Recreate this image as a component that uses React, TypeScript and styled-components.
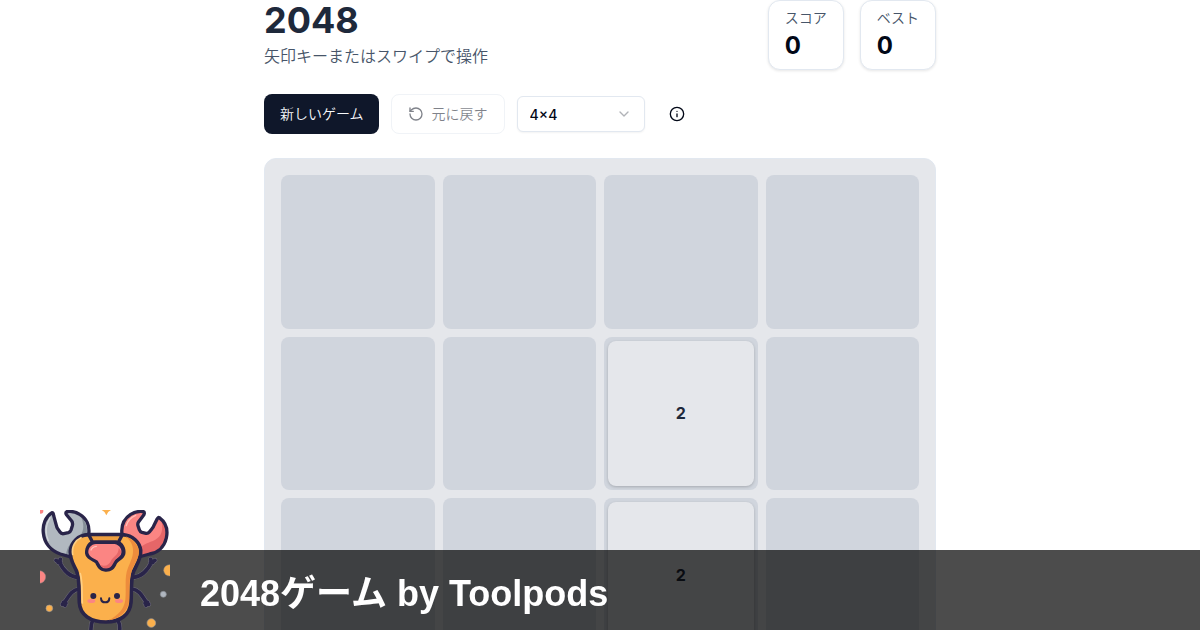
import React, { useState } from "react";
import styled, { createGlobalStyle } from "styled-components";
import { ChevronDown, Info, RotateCcw } from "lucide-react";

const GlobalStyle = createGlobalStyle`
  *, *::before, *::after { box-sizing: border-box; }
  html, body { margin: 0; background: #ffffff; }
  body, button, select {
    font-family: Inter, "Noto Sans CJK JP", sans-serif;
    color: #020817;
  }
`;

const Page = styled.div`
  height: 100vh;
  overflow: hidden;
`;

const Game = styled.main`
  display: flex;
  flex-direction: column;
  gap: 24px;
  max-width: 672px;
  margin: 0 auto;
`;

const Header = styled.header`
  display: flex;
  justify-content: space-between;
  align-items: flex-start;
`;

const Title = styled.h1`
  margin: 0 0 4px;
  font-size: 36px;
  line-height: 40px;
  font-weight: 700;
  color: #1e293b;
`;

const Hint = styled.p`
  margin: 0;
  font-size: 16px;
  line-height: 24px;
  font-weight: 350;
  color: #475569;
`;

const Scores = styled.div`
  display: flex;
  gap: 16px;
`;

const ScoreCard = styled.div`
  padding: 8px 16px;
  border: 1px solid #e2e8f0;
  border-radius: 12px;
  background: #ffffff;
  box-shadow: 0 1px 3px rgba(0, 0, 0, 0.1);
`;

const ScoreLabel = styled.div`
  padding-bottom: 2px;
  font-size: 14px;
  line-height: 18px;
  font-weight: 350;
  color: #475569;
`;

const ScoreValue = styled.div`
  padding-top: 1px;
  font-size: 24px;
  line-height: 31px;
  font-weight: 700;
`;

const Toolbar = styled.div`
  display: flex;
  align-items: center;
  gap: 12px;
`;

const Button = styled.button<{ $variant: "primary" | "outline" | "ghost" }>`
  display: inline-flex;
  align-items: center;
  justify-content: center;
  gap: 8px;
  height: 40px;
  min-width: 40px;
  padding: 0 ${(p) => ({ primary: "15px 1px 16px", outline: "16px", ghost: "0" })[p.$variant]};
  border: ${(p) => (p.$variant === "outline" ? "1px solid #e2e8f0" : "0")};
  border-radius: 8px;
  background: ${(p) => (p.$variant === "primary" ? "#0f172a" : "transparent")};
  color: ${(p) => (p.$variant === "primary" ? "#f8fafc" : "#020817")};
  font-size: 14px;
  line-height: 20px;
  font-weight: 350;

  &:disabled { opacity: 0.5; }
`;

const SelectBox = styled.div`
  display: grid;
  align-items: center;
  width: 128px;

  > * { grid-area: 1 / 1; }

  svg {
    justify-self: end;
    margin-right: 13px;
    color: #020817;
    opacity: 0.3;
    pointer-events: none;
  }
`;

const SizeSelect = styled.select`
  appearance: none;
  width: 100%;
  height: 36px;
  padding: 0 12px;
  border: 1px solid #e2e8f0;
  border-radius: 6px;
  background: #ffffff;
  box-shadow: 0 1px 2px rgba(0, 0, 0, 0.05);
  font-size: 14px;
  font-weight: 500;
`;

const Board = styled.div`
  display: grid;
  grid-template-columns: repeat(4, 1fr);
  gap: 8px;
  padding: 16px;
  border: 1px solid #e2e8f0;
  border-radius: 12px;
  background: #e5e7eb;
`;

const Cell = styled.div`
  display: flex;
  aspect-ratio: 1;
  padding: 4px;
  border-radius: 8px;
  background: #d0d5dd;
`;

const Tile = styled.div`
  display: flex;
  flex: 1;
  align-items: center;
  justify-content: center;
  border-radius: 8px;
  background: #e5e7eb;
  box-shadow: 0 1px 3px rgba(0, 0, 0, 0.2);
  font-size: 16px;
  font-weight: 700;
  color: #1e293b;
`;

const Banner = styled.footer`
  position: fixed;
  inset: auto 0 0 0;
  display: flex;
  align-items: flex-end;
  gap: 30px;
  height: 80px;
  padding-left: 40px;
  background: rgba(0, 0, 0, 0.7);
`;

const BannerText = styled.div`
  padding-top: 8px;
  font-family: "Liberation Sans", "Noto Sans CJK JP", sans-serif;
  font-size: 36px;
  line-height: 72px;
  font-weight: 700;
  white-space: nowrap;
  color: #ffffff;
`;

const MascotArt = styled.svg`
  display: block;
  flex: none;
  width: 130px;
  height: 120px;
`;

const INK = "#292449";

const GREY_WRENCH =
  "M66 38C46 50 37 75 40 99C43 129 62 152 91 162L127 172L176 104C180 78 170 55 149 43C138 36 124 33 111 35C106 37 107 41 110 45L125 63Q129 69 127 77L123 90Q121 96 115 98L101 101Q94 102 90 96L83 86Q80 82 79 76L71 47Q70 38 66 38Z";
const RED_WRENCH =
  "M388 53C408 68 414 91 409 114C403 142 382 158 359 162L326 171L276 103C273 79 282 56 302 43C314 36 328 33 340 35C345 37 343 43 339 48L326 65Q322 71 324 77L328 89Q330 95 336 97L348 100Q354 101 358 96L366 86Q370 82 372 76L381 58Q384 51 388 53Z";

function Mascot() {
  return (
    <MascotArt viewBox="30 30 390 360" role="img" aria-label="Toolpods">
      <circle cx="32" cy="33" r="8" fill="#fb8583" />
      <path d="M215 30H243Q233 34 229 46Q225 34 215 30Z" fill="#fbb04c" />
      <circle cx="28" cy="231" r="19" fill="#fb8583" stroke="#858080" strokeWidth="1.5" />
      <circle cx="418" cy="211" r="17" fill="#fbb04c" stroke="#858080" strokeWidth="1.5" />
      <circle cx="58" cy="325" r="10" fill="#fbb04c" stroke="#a39c94" strokeWidth="2" />
      <circle cx="364" cy="369" r="13" fill="#fbb04c" stroke="#a39c94" strokeWidth="2" />
      <circle cx="400" cy="283" r="9" fill="#afb6bf" stroke="#858a90" strokeWidth="2" />

      <g fill="none" strokeLinecap="round" strokeLinejoin="round">
        {["#716e7a", INK].map((stroke, i) => (
          <g key={stroke} stroke={stroke} strokeWidth={i ? 11 : 14}>
            <path d="M143 232C119 230 100 211 87 184M78 181L88 188L91 178M84 187L92 188" />
            <path d="M310 232C334 230 353 211 366 184M375 181L365 188L362 178M369 187L361 188" />
            <path d="M148 267C123 270 115 292 101 311M97 313L108 310M100 307L105 316" />
            <path d="M306 267C331 270 338 292 352 311M356 313L345 310M353 307L348 316" />
            <path d="M187 364Q182 374 183 394M265 364Q271 374 269 394" />
          </g>
        ))}
      </g>

      <path d={GREY_WRENCH} fill="#b1b8c0" />
      <path d="M152 49C170 67 174 88 168 111L124 154L108 164C111 139 126 120 150 107C164 93 162 68 152 49Z" fill="#858e98" />
      <path d="M60 53C46 77 46 103 55 122" fill="none" stroke="#d4d8dc" strokeWidth="4" strokeLinecap="round" />
      <path d={GREY_WRENCH} fill="none" stroke={INK} strokeWidth="10" strokeLinejoin="round" />

      <path d={RED_WRENCH} fill="#fb8583" />
      <path d="M395 66C400 92 394 109 376 119C356 129 340 130 330 146L334 165C370 160 403 144 408 107Q408 80 395 66Z" fill="#e56668" />
      <path d="M289 77C293 62 303 52 317 46" fill="none" stroke="#ffc1b9" strokeWidth="4" strokeLinecap="round" />
      <path d={RED_WRENCH} fill="none" stroke={INK} strokeWidth="10" strokeLinejoin="round" />

      <path d="M174 104H278C309 107 329 126 332 151C334 174 320 194 310 216C302 240 305 273 303 307C300 344 271 366 228 366C182 366 150 345 148 307C146 270 150 239 140 214C130 191 119 179 121 153C124 126 144 106 174 104Z" fill="#fbb04c" stroke={INK} strokeWidth="11" strokeLinejoin="round" />
      <path d="M286 109C306 115 322 131 326 151C329 173 314 190 305 212C295 240 300 277 297 307C292 337 267 357 237 361C266 344 282 328 286 300C290 264 282 233 294 203C306 176 313 159 307 137Q301 120 286 109Z" fill="#ed8c3c" />
      <path d="M128 163C124 139 137 120 153 113M151 221C158 246 155 282 157 309" fill="none" stroke="#ffd084" strokeWidth="5" strokeLinecap="round" />
      <path d="M174 104H278L268 122H185Z" fill="#ed9e40" />
      <path d="M173 104H280M178 108L191 133M275 108L262 133" fill="none" stroke={INK} strokeWidth="10" strokeLinecap="round" />
      <path d="M194 121H259C279 124 290 145 286 163C281 179 264 184 260 192C254 208 243 216 226 215C208 214 201 201 196 190C187 182 168 179 165 160C164 141 175 122 194 121Z" fill={INK} />
      <path d="M198 132H254C270 135 278 150 273 163C268 173 253 178 248 188C243 200 236 206 225 205C214 204 209 192 203 182C194 175 178 172 175 158C174 144 183 133 198 132Z" fill="#fb8583" />
      <path d="M266 144C278 153 274 165 263 173C251 179 250 199 236 204Q220 208 211 195C228 201 238 193 243 182C249 169 266 167 266 144Z" fill="#e56668" />
      <path d="M183 150Q187 140 199 139" fill="none" stroke="#ffc1b9" strokeWidth="4" strokeLinecap="round" />
      <ellipse cx="184" cy="303" rx="12" ry="6" fill="#fb8583" />
      <ellipse cx="267" cy="303" rx="12" ry="6" fill="#fb8583" />
      <circle cx="190" cy="288" r="9" fill={INK} />
      <circle cx="261" cy="288" r="9" fill={INK} />
      <path d="M213 295C214 311 237 311 238 295" fill="none" stroke={INK} strokeWidth="6" strokeLinecap="round" />
    </MascotArt>
  );
}

const startingTiles = [0, 0, 0, 0, 0, 0, 2, 0, 0, 0, 2, 0, 0, 0, 0, 0];

export default function App() {
  const [size, setSize] = useState("4");

  return (
    <Page>
      <GlobalStyle />
      <Game>
        <Header>
          <div>
            <Title>2048</Title>
            <Hint>矢印キーまたはスワイプで操作</Hint>
          </div>
          <Scores>
            <ScoreCard>
              <ScoreLabel>スコア</ScoreLabel>
              <ScoreValue>0</ScoreValue>
            </ScoreCard>
            <ScoreCard>
              <ScoreLabel>ベスト</ScoreLabel>
              <ScoreValue>0</ScoreValue>
            </ScoreCard>
          </Scores>
        </Header>
        <Toolbar>
          <Button type="button" $variant="primary">新しいゲーム</Button>
          <Button type="button" $variant="outline" disabled>
            <RotateCcw size={16} />
            元に戻す
          </Button>
          <SelectBox>
            <SizeSelect aria-label="サイズ" value={size} onChange={(e) => setSize(e.target.value)}>
              <option value="4">4×4</option>
            </SizeSelect>
            <ChevronDown size={16} />
          </SelectBox>
          <Button type="button" $variant="ghost" aria-label="遊び方">
            <Info size={16} />
          </Button>
        </Toolbar>
        <Board>
          {startingTiles.map((value, i) => (
            <Cell key={i}>{value > 0 && <Tile>{value}</Tile>}</Cell>
          ))}
        </Board>
      </Game>
      <Banner>
        <Mascot />
        <BannerText>2048ゲーム by Toolpods</BannerText>
      </Banner>
    </Page>
  );
}
